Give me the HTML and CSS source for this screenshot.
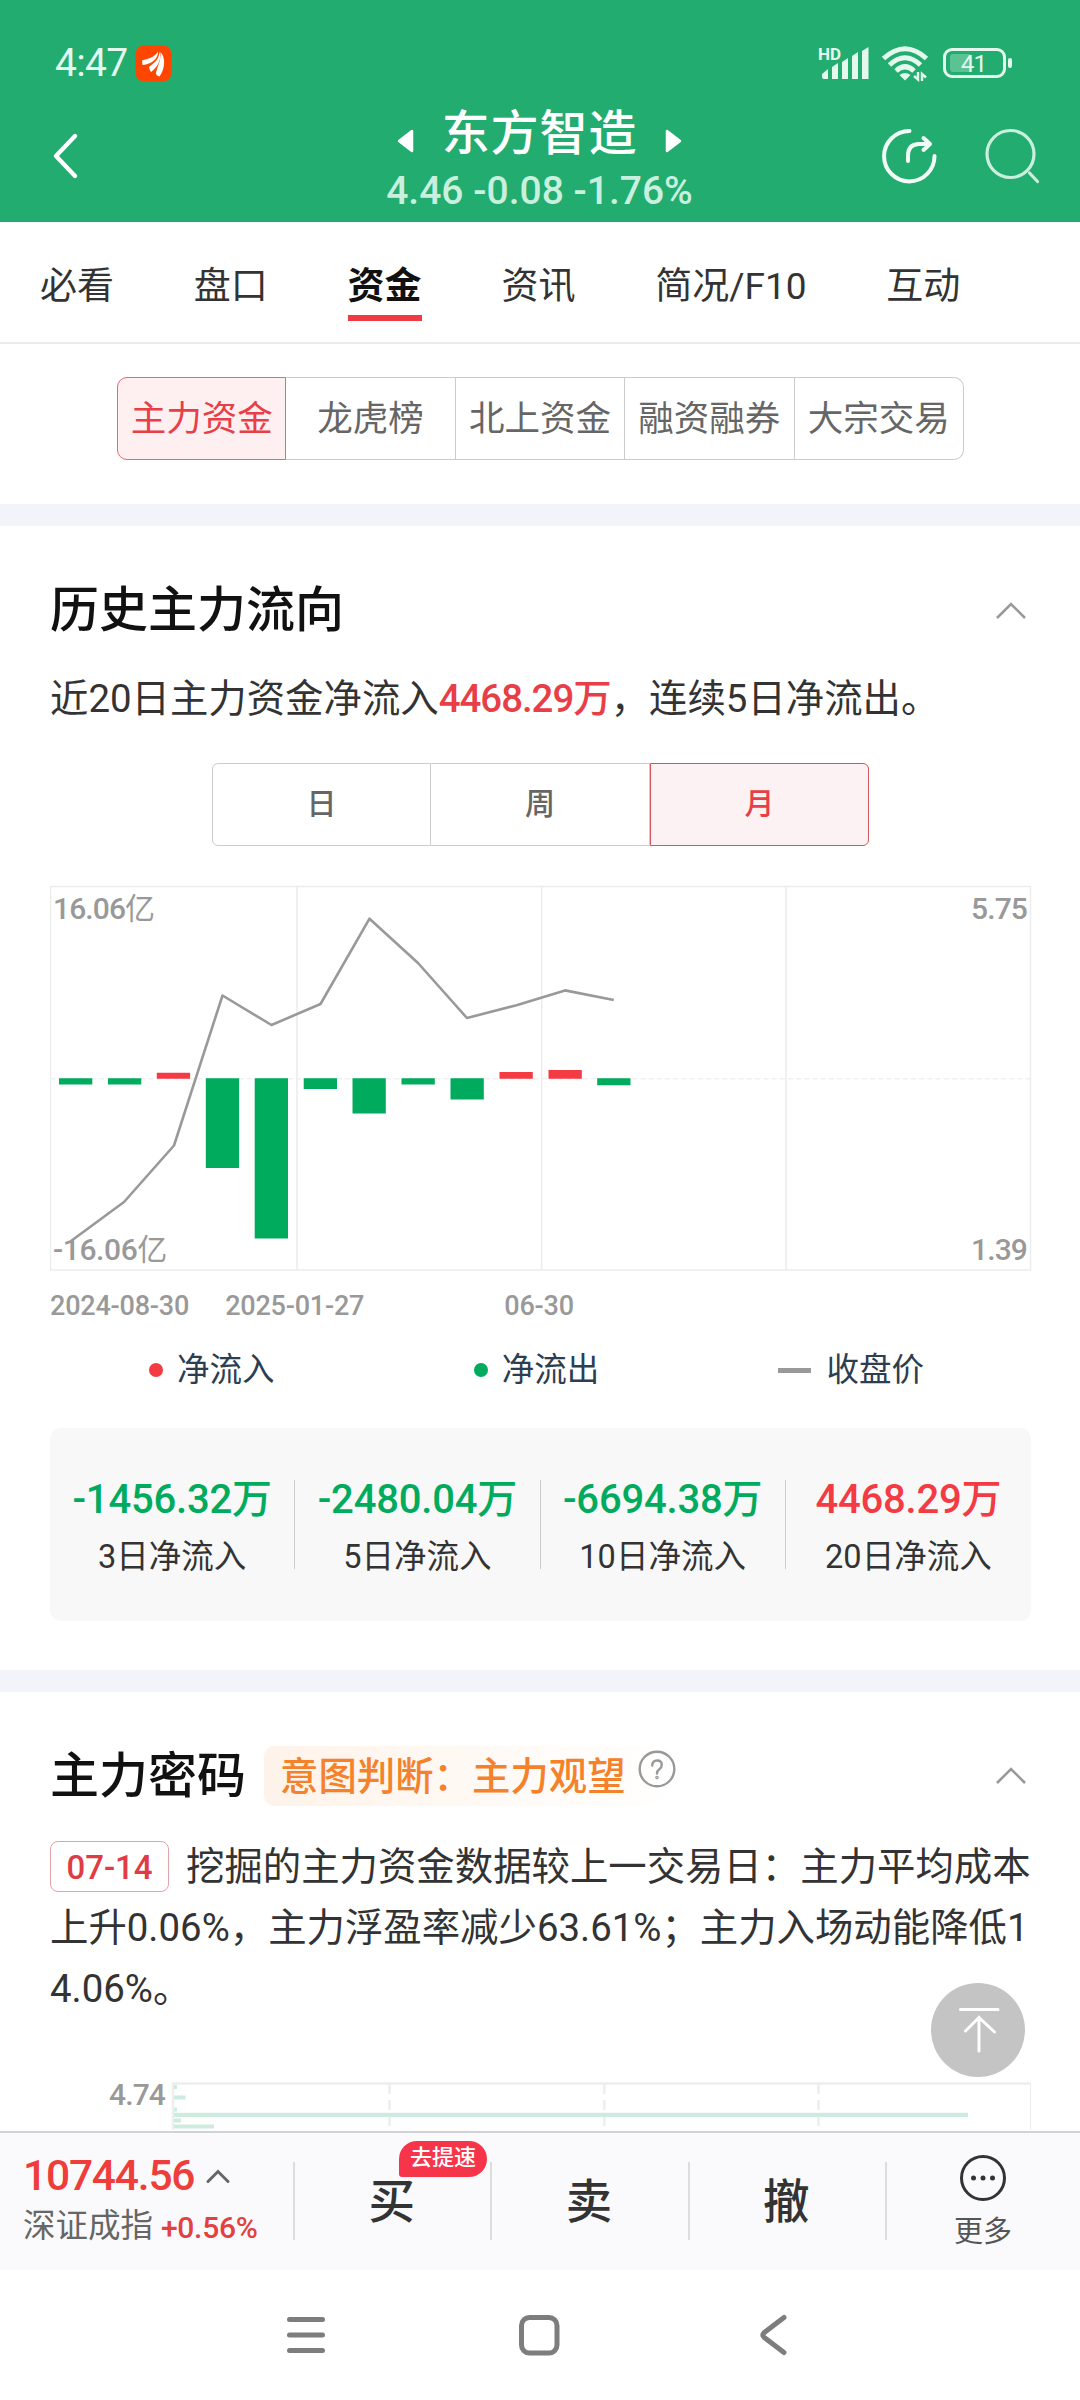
FILE: index.html
```html
<!DOCTYPE html>
<html lang="zh-CN">
<head>
<meta charset="utf-8">
<title>东方智造 资金</title>
<link rel="stylesheet" href="styles.css">
</head>
<body>
<div class="screen">
  <header class="header">
    <div class="status">
      <div class="status-left">
        <span class="clock">4:47</span>
        <svg class="app-icon" width="37" height="37" viewBox="0 0 37 37"><rect x=".5" y=".5" width="36" height="36" rx="8.5" fill="#ff4600"/><g fill="#fff"><path d="M7 15.500C13 13.500 19 13 23 6.500C23.500 13 17 19.500 7.500 20Z"/><path d="M14 22C19 18 24 15 24.500 6.500C26.500 14 24 21 16 27Q14.500 25 14 22Z"/><path d="M21 29C21.500 22 26 18 25.500 7C31 13 30 24 24.500 31.500Q22 31 21 29Z"/></g></svg>
      </div>
      <svg class="status-icons" width="196" height="38" viewBox="818 44 196 38">
        <text x="818" y="59.500" class="hd">HD</text>
        <g fill="#e4f8ee">
          <path d="M822 79V76L828 71V81H824Q822 81 822 79ZM832 81V69L838 65V81ZM842 81V64L848 60V81ZM852 81V58L858 54V81ZM862 81V53L868.500 49V81Z" transform="translate(0 -2)"/>
        </g>
        <g fill="none" stroke="#e4f8ee" stroke-width="5">
          <path d="M883.500 58.500Q905 39 926.500 58.500"/>
          <path d="M889.500 65Q905 50.500 920.500 65"/>
          <path d="M896 71Q905 62.500 914 71"/>
        </g>
        <path d="M899.500 75Q905 71 910.500 75L905 80.500Z" fill="#e4f8ee"/>
        <path d="M914 76L918 79.500V72M922 81V74L926 77.500" fill="none" stroke="#e4f8ee" stroke-width="2.400"/>
        <rect x="944.500" y="49.500" width="60" height="27" rx="7.500" fill="none" stroke="#e4f8ee" stroke-width="3"/>
        <path d="M953 54H970V72H953Q950 72 950 69V57Q950 54 953 54Z" fill="#5ac293"/>
        <rect x="1008" y="58" width="4" height="10" rx="2" fill="#e4f8ee"/>
        <text x="973.500" y="72" class="battery-level">41</text>
      </svg>
    </div>
    <div class="titlebar">
      <svg class="back" width="28" height="46" viewBox="0 0 28 46"><path d="M24 3L5 23L24 43" fill="none" stroke="#fff" stroke-width="4.300" stroke-linecap="round" stroke-linejoin="round"/></svg>
      <div class="stock">
        <div class="stock-name">
          <svg width="17" height="24" viewBox="0 0 17 24"><path d="M15 2V22L2 12Z" fill="#fff" stroke="#fff" stroke-width="2.500" stroke-linejoin="round"/></svg>
          <h1>东方智造</h1>
          <svg width="17" height="24" viewBox="0 0 17 24"><path d="M2 2V22L15 12Z" fill="#fff" stroke="#fff" stroke-width="2.500" stroke-linejoin="round"/></svg>
        </div>
        <div class="quote">4.46 -0.08 -1.76%</div>
      </div>
      <div class="actions">
        <svg width="58" height="58" viewBox="880 127 58 58" fill="none" stroke="#f2fcf7" stroke-width="4" stroke-linecap="round"><path d="M909.500 131A25.200 25.200 0 1 0 934.500 156"/><path d="M908 161V156Q908 144 919 144H929M923.500 138L930 144L923.500 150" stroke-linejoin="round"/></svg>
        <svg width="58" height="58" viewBox="984 127 58 58" fill="none" stroke="#c9f0de" stroke-width="3.200" stroke-linecap="round"><circle cx="1010.500" cy="154" r="23.500"/><path d="M1029.500 173L1037.500 181.500"/></svg>
      </div>
    </div>
  </header>

  <nav class="tabs">
    <a>必看</a><a>盘口</a><a class="on">资金</a><a>资讯</a><a>简况/F10</a><a>互动</a>
  </nav>
  <div class="pills-wrap">
    <div class="pills"><span class="on">主力资金</span><span>龙虎榜</span><span>北上资金</span><span>融资融券</span><span>大宗交易</span></div>
  </div>

  <main class="content">
    <section class="card flow">
      <div class="card-head">
        <h2>历史主力流向</h2>
        <svg class="chev" width="32" height="20" viewBox="0 0 32 20"><path d="M2 17L16 3L30 17"/></svg>
      </div>
      <p class="summary">近20日主力资金净流入<b>4468.29万</b>，连续5日净流出。</p>
      <div class="periods"><span>日</span><span>周</span><span class="on">月</span></div>
      <svg class="chart" width="982" height="386" viewBox="50 885 982 386">
        <g fill="none" stroke="#ececec" stroke-width="1.500">
          <rect x="50.500" y="886.500" width="980" height="383.500"/>
          <path d="M297 886V1270M541.700 886V1270M786 886V1270"/>
          <path d="M50 1078.700H1030" stroke="#f0f0f0" stroke-dasharray="5 3.200"/>
        </g>
        <g fill="#00ab5d">
          <path d="M59 1078.300h33.300v6.200H59zM108 1078.300h33.300v6.200H108zM205.800 1078.300h33.300v89.700h-33.300zM254.700 1078.300h33.300v160.200h-33.300zM303.700 1078.300h33.300v10.700h-33.300zM352.500 1078.300h33.300v35.200h-33.300zM401.500 1078.300h33.300v6.200h-33.300zM450.500 1078.300h33.300v21.200h-33.300zM597.200 1078.300h33.300v7h-33.300z"/>
        </g>
        <path fill="#f43a43" d="M156.800 1072.800h33.300v6h-33.300zM499.500 1072h33.300v6.800h-33.300zM548.500 1070h33.300v8.800h-33.300z"/>
        <polyline fill="none" stroke="#999" stroke-width="2.600" stroke-linejoin="round" points="71,1241 124,1202 174,1145.500 222.500,995.500 271.500,1025 320.500,1004 369.500,918.700 418,963 467,1018 516.500,1005.200 565,990.400 613.800,1000"/>
        <g class="axis">
          <text x="53" y="918.700">16.06<tspan class="unit">亿</tspan></text>
          <text x="53" y="1260" class="low">-16.06<tspan class="unit">亿</tspan></text>
          <text x="1027" y="918.700" text-anchor="end">5.75</text>
          <text x="1027" y="1260" text-anchor="end">1.39</text>
        </g>
      </svg>
      <div class="dates"><span>2024-08-30</span><span>2025-01-27</span><span>06-30</span></div>
      <div class="legend">
        <span><i class="dot red"></i>净流入</span><span class="out"><i class="dot green"></i>净流出</span><span><i class="dash"></i>收盘价</span>
      </div>
      <div class="stats">
        <div><strong>-1456.32万</strong><em>3日净流入</em></div>
        <div><strong>-2480.04万</strong><em>5日净流入</em></div>
        <div><strong>-6694.38万</strong><em>10日净流入</em></div>
        <div><strong class="up">4468.29万</strong><em>20日净流入</em></div>
      </div>
    </section>

    <section class="card code">
      <div class="card-head">
        <div class="head-left">
          <h2>主力密码</h2>
          <div class="intent"><span>意图判断：主力观望</span>
            <svg width="38" height="38" viewBox="0 0 38 38" fill="none" stroke="#999" stroke-width="2.400" stroke-linecap="round"><circle cx="19" cy="19" r="17.300"/><path d="M14.200 15.500Q14.200 10.500 19 10.500T23.800 15Q23.800 17.500 21.300 19.200Q19 20.800 19 23.500"/><circle cx="19" cy="27.500" r=".6"/></svg>
          </div>
        </div>
        <svg class="chev" width="32" height="20" viewBox="0 0 32 20"><path d="M2 17L16 3L30 17"/></svg>
      </div>
      <div class="report">
        <div class="line"><span class="tag">07-14</span><span>挖掘的主力资金数据较上一交易日：主力平均成本</span></div>
        <div class="line">上升0.06%，主力浮盈率减少63.61%；主力入场动能降低1</div>
        <div class="line">4.06%。</div>
      </div>
      <svg class="mini" width="982" height="58" viewBox="50 2073 982 58">
        <text x="165" y="2106" text-anchor="end" class="mini-label">4.74</text>
        <g fill="none" stroke="#eee">
          <path d="M173 2131V2084.500H1031" stroke-width="2.500"/>
          <path d="M1030.500 2084V2131" stroke-width="1.200"/>
          <path d="M389.500 2085V2128M604.300 2085V2128M818.500 2085V2128" stroke-width="2.600" stroke-dasharray="10 6"/>
        </g>
        <path fill="#cdecdf" d="M174 2086h3v4h-3zM174 2096.500h11.500v4H174zM174 2108.500h3v4h-3zM174 2113.800h794v4.200H174zM174 2119.500h7v4h-7zM174 2125.500h40v4h-40z"/>
      </svg>
    </section>
    <svg class="to-top" width="94" height="94" viewBox="931 1983 94 94"><circle cx="978" cy="2030" r="47" fill="#c4c4c4"/><path d="M960.500 2009.500H998M979 2051V2017M965.500 2031L979 2017.500L994.500 2032" fill="none" stroke="#fff" stroke-width="3" stroke-linecap="round" stroke-linejoin="round"/></svg>
  </main>

  <footer class="trade">
    <div class="index">
      <div class="index-value"><span>10744.56</span><svg width="26" height="16" viewBox="0 0 26 16"><path d="M3 13.500L13 3.500L23 13.500" fill="none" stroke="#666" stroke-width="3" stroke-linecap="round"/></svg></div>
      <div class="index-name">深证成指<span>+0.56%</span></div>
    </div>
    <div class="op">买<span class="boost">去提速</span></div>
    <div class="op">卖</div>
    <div class="op">撤</div>
    <div class="more">
      <svg width="48" height="48" viewBox="0 0 48 48"><circle cx="24" cy="24" r="21.500" fill="none" stroke="#333" stroke-width="3"/><g fill="#333"><circle cx="14.500" cy="24" r="2.500"/><circle cx="24" cy="24" r="2.500"/><circle cx="33.500" cy="24" r="2.500"/></g></svg>
      <span>更多</span>
    </div>
  </footer>
  <div class="sysnav">
    <svg width="44" height="44" viewBox="0 0 44 44"><path d="M5.500 6.500H38.500M5.500 22H38.500M5.500 37.500H38.500"/></svg>
    <svg width="44" height="44" viewBox="0 0 44 44"><rect x="4.500" y="4.500" width="35.500" height="35.500" rx="8"/></svg>
    <svg width="44" height="44" viewBox="0 0 44 44"><path d="M34 4.500L14 19.800Q11.500 22 14 24.200L34 39.500"/></svg>
  </div>
</div>
</body>
</html>
```
FILE: styles.css
```css
* { box-sizing: border-box; }
body {
  margin: 0;
  background: #fff;
  color: #333;
  font-family: Roboto, "Noto Sans CJK SC", sans-serif;
}
h1, h2, p { margin: 0; font-weight: 500; }
em, i { font-style: normal; }
svg { display: block; flex: none; }
.screen {
  width: 1080px;
  height: 2400px;
  display: flex;
  flex-direction: column;
  overflow: hidden;
}

/* green header */
.header { height: 222px; background: #22ac6f; color: #fff; }
.status {
  padding: 32px 66px 0 55px;
  display: flex;
  justify-content: space-between;
  align-items: center;
  height: 94px;
}
.status-left { display: flex; align-items: center; gap: 8px; color: #e4f8ee; }
.clock { font-size: 39px; line-height: 40px; letter-spacing: -.7px; }
.hd { font-size: 17px; font-weight: 700; fill: #e4f8ee; }
.battery-level { text-anchor: middle; font-size: 24.500px; fill: #e4f8ee; letter-spacing: -1px; }
.titlebar { height: 128px; display: flex; justify-content: space-between; padding: 0 38px 0 51px; }
.back { margin-top: 39px; }
.stock { display: flex; flex-direction: column; align-items: center; margin-left: 120px; }
.stock-name { display: flex; align-items: center; gap: 28px; height: 77px; }
.stock-name svg { margin-top: 16px; }
.stock-name h1 { font-size: 48px; letter-spacing: .9px; line-height: 76px; font-weight: 500; padding-top: 3px; }
.quote { font-size: 39px; line-height: 40px; letter-spacing: 0; color: #c9f0de; font-weight: 500; }
.actions { display: flex; gap: 46px; margin-top: 33px; }

/* tabs */
.tabs {
  height: 122px;
  padding: 0 40px;
  display: flex;
  gap: 79.800px;
  border-bottom: 2px solid #ebebeb;
  font-size: 37px;
  line-height: 130px;
}
.tabs .on { font-weight: 700; color: #111; background: linear-gradient(#f03a43, #f03a43) 0 93px / 100% 6px no-repeat; }
.pills-wrap { height: 182px; padding: 33px 116px 0 117px; border-bottom: 22px solid #f3f4f9; }
.pills { height: 83px; display: flex; color: #666; font-size: 35.500px; }
.pills span, .periods span {
  width: 20%;
  display: flex;
  align-items: center;
  justify-content: center;
  border: 1.500px solid #ccc;
  border-left-width: 0;
  padding-bottom: 7px;
}
.pills span:first-child { border-radius: 10px 0 0 10px; }
.pills span:last-child { border-radius: 0 10px 10px 0; }
.pills .on { border: 1.500px solid #dc6b72; background: #feeff0; color: #e83e47; }

/* content */
.content { height: 1605px; flex: none; position: relative; overflow: hidden; }
.card { padding: 0 49px 0 50px; }
.card-head { display: flex; justify-content: space-between; align-items: center; padding-right: 4px; }
.card-head h2 { font-size: 49px; line-height: 60px; color: #111; padding-top: 1px; }
.chev path { fill: none; stroke: #999; stroke-width: 2.600; }
.flow { height: 1166px; padding-top: 54px; border-bottom: 22px solid #f3f4f9; }
.summary { font-size: 38.400px; line-height: 50px; margin-top: 33px; white-space: nowrap; font-weight: 400; }
.summary b { font-weight: 500; color: #e83e47; letter-spacing: -1px; }
.periods {
  width: 657px;
  height: 83px;
  margin: 39px auto 0 162px;
  display: flex;
  font-size: 30px;
  font-weight: 500;
  color: #666;
}
.periods span { width: 33.333%; }
.periods span:first-child { border-left-width: 1.500px; border-radius: 6px 0 0 6px; }
.periods span:last-child { border-radius: 0 6px 6px 0; }
.periods .on { border: 1.500px solid #d4575e; background: #fdf2f3; color: #e83e47; }
.chart { margin-top: 39px; }
.axis, .mini-label { font-size: 30px; fill: #999; font-weight: 500; letter-spacing: -.9px; }
.axis .low { letter-spacing: -.4px; }
.unit { font-weight: 400; }
.dates { display: flex; margin-top: 17px; font-size: 27px; line-height: 36px; color: #999; letter-spacing: -.2px; font-weight: 500; }
.dates span:nth-child(2) { margin-left: 36px; }
.dates span:nth-child(3) { margin-left: 140px; }
.legend {
  display: flex;
  justify-content: space-between;
  padding: 0 107px 0 99px;
  margin-top: 24px;
  height: 44px;
  font-size: 32.500px;
  color: #2c3e50;
}
.legend span { display: flex; align-items: center; line-height: 44px; }
.legend .out { margin-left: 20px; }
.dot { width: 14px; height: 14px; border-radius: 50%; margin-right: 14px; }
.red { background: #f43a43; }
.green { background: #00ab5d; }
.dash { width: 33px; height: 5px; background: #999; margin-right: 15px; }
.stats { height: 193px; margin-top: 36px; background: #f8f8f8; border-radius: 11px; display: flex; align-items: center; }
.stats div {
  width: 25%;
  height: 89px;
  display: flex;
  flex-direction: column;
  align-items: center;
  border-right: 1px solid #ccc;
}
.stats div:last-child { border-right: 0; }
.stats strong { font-size: 40px; line-height: 40px; font-weight: 500; color: #00ab5d; letter-spacing: -.2px; }
.stats .up { color: #f43a43; }
.stats em { font-size: 32.500px; line-height: 40px; margin-top: 17px; }

/* second card */
.code { padding-top: 52px; }
.code .card-head h2 { padding-top: 3px; }
.head-left { display: flex; align-items: center; gap: 18px; }
.intent {
  height: 60px;
  width: 420px;
  padding-left: 16px;
  border-radius: 10px;
  background: linear-gradient(90deg, #fef3ea, #fff);
  display: flex;
  gap: 12px;
  font-size: 38.400px;
  line-height: 61px;
  font-weight: 500;
  color: #f5822a;
}
.intent svg { margin-top: 4px; }
.report { font-size: 38.400px; padding-top: 29px; white-space: nowrap; }
.line { height: 61px; line-height: 61px; display: flex; align-items: center; }
.tag {
  width: 119px;
  height: 51px;
  margin-right: 17px;
  border: 1.500px solid #e4a3a7;
  border-radius: 8px;
  color: #e03c45;
  font-size: 33px;
  font-weight: 500;
  line-height: 51px;
  text-align: center;
}
.mini { margin-top: 53px; }
.to-top { position: absolute; left: 931px; top: 1457px; }

/* trade bar */
.trade { height: 139px; flex: none; display: flex; background: #fafafc; border-top: 2px solid #d2d2d6; }
.index { width: 293px; padding: 22px 0 0 23px; }
.index-value { display: flex; align-items: center; gap: 11px; color: #ee3d3a; font-size: 42.500px; line-height: 42px; font-weight: 500; letter-spacing: -1.200px; }
.index-name { display: flex; font-size: 32.500px; line-height: 40px; margin-top: 9px; color: #666; white-space: nowrap; }
.index-name span { font-size: 30px; line-height: 43px; font-weight: 500; color: #e2413f; margin-left: 8px; letter-spacing: -.3px; }
.op, .more { background: linear-gradient(#ddd, #ddd) 0 29px / 2px 78px no-repeat; }
.op { width: 197.300px; text-align: center; font-size: 46.500px; line-height: 138px; font-weight: 500; position: relative; }
.boost {
  position: absolute;
  left: 106px;
  top: 8px;
  width: 88px;
  height: 36px;
  border-radius: 18px 18px 18px 3px;
  background: #f6354a;
  color: #fff;
  font-size: 22px;
  line-height: 34px;
}
.more { flex: 1; display: flex; flex-direction: column; align-items: center; padding: 21px 0 0 1px; font-size: 29px; line-height: 36px; color: #555; }
.more span { margin-top: 12px; }
.sysnav { height: 130px; display: flex; justify-content: center; gap: 189px; align-items: center; padding-right: 3px; }
.sysnav path, .sysnav rect { fill: none; stroke: #7d7d7d; stroke-width: 5; stroke-linecap: round; }
```
